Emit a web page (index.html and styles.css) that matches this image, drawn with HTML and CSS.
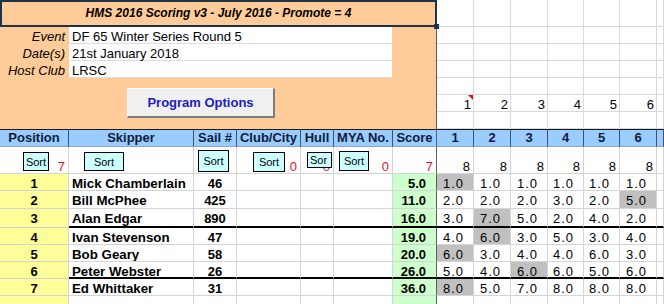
FILE: index.html
```html
<!DOCTYPE html>
<html lang="en">
<head>
    <meta charset="UTF-8">
    <meta name="viewport" content="width=device-width, initial-scale=1.0">
    <title>HMS 2016 Scoring</title>
    <link rel="stylesheet" href="styles.css">
</head>
<body>

    <div class="top">
        <div class="panel">
            <div class="title">HMS 2016 Scoring v3 - July 2016 - Promote = 4</div>
            <div class="info">
                <div class="label">Event</div><div class="value">DF 65 Winter Series Round 5</div>
                <div class="label">Date(s)</div><div class="value">21st January 2018</div>
                <div class="label">Host Club</div><div class="value">LRSC</div>
            </div>
            <button class="options">Program Options</button>
        </div>

        <div class="blank">
            <div></div><div></div><div></div><div></div><div></div><div></div><div></div>
            <div></div><div></div><div></div><div></div><div></div><div></div><div></div>
            <div></div><div></div><div></div><div></div><div></div><div></div><div></div>
            <div></div><div></div><div></div><div></div><div></div><div></div><div></div>
            <div></div><div></div><div></div><div></div><div></div><div></div><div></div>
            <div class="num note">1</div><div class="num">2</div><div class="num">3</div><div class="num">4</div><div class="num">5</div><div class="num">6</div><div></div>
            <div></div><div></div><div></div><div></div><div></div><div></div><div></div>
        </div>
    </div>

    <div class="row head">
        <div>Position</div><div>Skipper</div><div>Sail #</div><div>Club/City</div><div>Hull</div><div>MYA No.</div><div>Score</div>
        <div>1</div><div>2</div><div>3</div><div>4</div><div>5</div><div>6</div><div></div>
    </div>

    <div class="row sorts">
        <div><button class="sort s-pos">Sort</button><span class="count">7</span></div>
        <div><button class="sort s-skip">Sort</button></div>
        <div><button class="sort s-sail">Sort</button></div>
        <div><button class="sort s-club">Sort</button><span class="count">0</span></div>
        <div><button class="sort s-hull"><span>Sort</span></button><span class="count">0</span></div>
        <div><button class="sort s-mya">Sort</button><span class="count">0</span></div>
        <div><span class="count">7</span></div>
        <div>8</div><div>8</div><div>8</div><div>8</div><div>8</div><div>8</div><div></div>
    </div>

    <div class="row data">
        <div class="pos">1</div><div class="name">Mick Chamberlain</div><div class="sail">46</div><div></div><div></div><div></div><div class="score">5.0</div>
        <div class="r drop">1.0</div><div class="r">1.0</div><div class="r">1.0</div><div class="r">1.0</div><div class="r">1.0</div><div class="r">1.0</div><div></div>
    </div>
    <div class="row data tall">
        <div class="pos">2</div><div class="name">Bill McPhee</div><div class="sail">425</div><div></div><div></div><div></div><div class="score">11.0</div>
        <div class="r">2.0</div><div class="r">2.0</div><div class="r">2.0</div><div class="r">3.0</div><div class="r">2.0</div><div class="r drop">5.0</div><div></div>
    </div>
    <div class="row data split first">
        <div class="pos">3</div><div class="name">Alan Edgar</div><div class="sail">890</div><div></div><div></div><div></div><div class="score">16.0</div>
        <div class="r">3.0</div><div class="r drop">7.0</div><div class="r">5.0</div><div class="r">2.0</div><div class="r">4.0</div><div class="r">2.0</div><div></div>
    </div>
    <div class="row data">
        <div class="pos">4</div><div class="name">Ivan&nbsp;Stevenson</div><div class="sail">47</div><div></div><div></div><div></div><div class="score">19.0</div>
        <div class="r">4.0</div><div class="r drop">6.0</div><div class="r">3.0</div><div class="r">5.0</div><div class="r">3.0</div><div class="r">4.0</div><div></div>
    </div>
    <div class="row data">
        <div class="pos">5</div><div class="name">Bob Geary</div><div class="sail">58</div><div></div><div></div><div></div><div class="score">20.0</div>
        <div class="r drop">6.0</div><div class="r">3.0</div><div class="r">4.0</div><div class="r">4.0</div><div class="r">6.0</div><div class="r">3.0</div><div></div>
    </div>
    <div class="row data split">
        <div class="pos">6</div><div class="name">Peter Webster</div><div class="sail">26</div><div></div><div></div><div></div><div class="score">26.0</div>
        <div class="r">5.0</div><div class="r">4.0</div><div class="r drop">6.0</div><div class="r">6.0</div><div class="r">5.0</div><div class="r">6.0</div><div></div>
    </div>
    <div class="row data">
        <div class="pos">7</div><div class="name">Ed Whittaker</div><div class="sail">31</div><div></div><div></div><div></div><div class="score">36.0</div>
        <div class="r drop">8.0</div><div class="r">5.0</div><div class="r">7.0</div><div class="r">8.0</div><div class="r">8.0</div><div class="r">8.0</div><div></div>
    </div>
    <div class="row data tail">
        <div class="pos"></div><div></div><div></div><div></div><div></div><div></div><div class="score"></div>
        <div></div><div></div><div></div><div></div><div></div><div></div><div></div>
    </div>

</body>
</html>
```

FILE: styles.css
```css
body
{
    margin: 0;
    width: 664px;
    height: 304px;
    overflow: hidden;
    background-color: white;
    color: black;
    font-family: "Liberation Sans", Arial, sans-serif;
    font-size: 13px;
}

/* ---- top block: orange panel + empty sheet cells ---- */

.top
{
    display: grid;
    grid-template-columns: 437px 227px;
    height: 129px;
}

.panel
{
    background-color: #ffcc99;
    border-right: 1px solid #5c5c5c;
}

.title
{
    position: relative;
    height: 27px;
    margin-right: -1px;
    box-sizing: border-box;
    border: 2px solid #1f3346;
    text-align: center;
    font-size: 12px;
    font-weight: bold;
    font-style: italic;
    line-height: 23px;
}
.title::after
{
    content: "";
    position: absolute;
    right: -4px;
    bottom: -4px;
    width: 5px;
    height: 5px;
    background-color: #1f3346;
}

.info
{
    display: grid;
    grid-template-columns: 69px 323px;
    grid-auto-rows: 17px;
}
.label
{
    font-style: italic;
    text-align: right;
    padding: 3px 4px 0 0;
    line-height: 14px;
}
.value
{
    background-color: white;
    padding: 3px 0 0 3px;
    line-height: 14px;
    border-bottom: 1px solid #dedede;
}

.options
{
    display: block;
    width: 148px;
    height: 30px;
    margin: 10px 0 0 127px;
    padding: 0;
    box-sizing: border-box;
    background-color: #f0f0f0;
    border: 1px solid #fbfbfb;
    border-right: 2px solid #7c7c7c;
    border-bottom: 2px solid #7c7c7c;
    color: #1c1cc6;
    font-family: "Liberation Sans", Arial, sans-serif;
    font-size: 13px;
    font-weight: bold;
}

.blank
{
    display: grid;
    grid-template-columns: 37px 37px 37px 36px 36px 37px 7px;
    grid-template-rows: 27px repeat(6, 17px);
}
.blank > div
{
    border-right: 1px solid #d9d9d9;
    border-bottom: 1px solid #d9d9d9;
}
.num
{
    position: relative;
    text-align: right;
    padding: 3px 2px 0 0;
    line-height: 14px;
}
.note::after
{
    content: "";
    position: absolute;
    top: 0;
    right: 0;
    border-left: 5px solid transparent;
    border-top: 5px solid #e01010;
}

/* ---- sheet rows ---- */

.row
{
    display: grid;
    grid-template-columns: 69px 125px 43px 64px 33px 59px 44px 37px 37px 37px 36px 36px 37px 7px;
}
.row > div
{
    box-sizing: border-box;
    border-right: 1px solid #d4d4d4;
    border-bottom: 1px solid #d4d4d4;
    white-space: nowrap;
    overflow: hidden;
}
.row > div:nth-child(7)
{
    border-right-color: #5e5e5e;
}

.head
{
    height: 18px;
}
.head > div
{
    background-color: #99ccff;
    border-top: 1px solid #1a1a1a;
    border-right-color: #41506c;
    border-bottom-color: #8aa6c4;
    color: #111a3c;
    text-align: center;
    font-weight: bold;
    line-height: 16px;
}

.sorts
{
    height: 27px;
}
.sorts > div
{
    position: relative;
    text-align: right;
    padding: 13px 3px 0 0;
    line-height: 14px;
}
.count
{
    color: #e3141e;
}

.sort
{
    position: absolute;
    top: 5px;
    height: 19px;
    padding: 0;
    box-sizing: border-box;
    background-color: #ccffff;
    border: 1px solid black;
    color: black;
    font-family: "Liberation Sans", Arial, sans-serif;
    font-size: 11px;
}
.s-pos  { left: 23px; width: 26px; }
.s-skip { left: 15px; width: 40px; }
.s-sail { left: 4px; top: 3px; width: 31px; height: 22px; }
.s-club { left: 16px; width: 32px; height: 20px; }
.s-hull { left: 6px; width: 25px; height: 16px; text-align: left; padding-left: 2px; }
.s-hull span
{
    display: block;
    width: 17px;
    overflow: hidden;
}
.s-mya  { left: 5px; top: 4px; width: 30px; height: 20px; }

.data
{
    height: 17px;
}
.data.tall
{
    height: 18px;
}
.data > div
{
    padding-top: 3px;
    line-height: 14px;
}
.split.first
{
    height: 19px;
}
.split > div:not(.pos)
{
    border-bottom: 2px solid black;
}
.tail
{
    height: 12px;
}

.pos
{
    background-color: #ffff99;
    text-align: center;
    font-weight: bold;
}
.name
{
    padding-left: 3px;
    font-weight: bold;
    font-size: 13.3px;
}
.sail
{
    text-align: center;
    font-weight: bold;
}
.score
{
    background-color: #ccffcc;
    text-align: right;
    padding-right: 10px;
    font-weight: bold;
}
.r
{
    text-align: right;
    padding-right: 9px;
    letter-spacing: 1px;
}
.drop
{
    background-color: #c0c0c0;
}
```
